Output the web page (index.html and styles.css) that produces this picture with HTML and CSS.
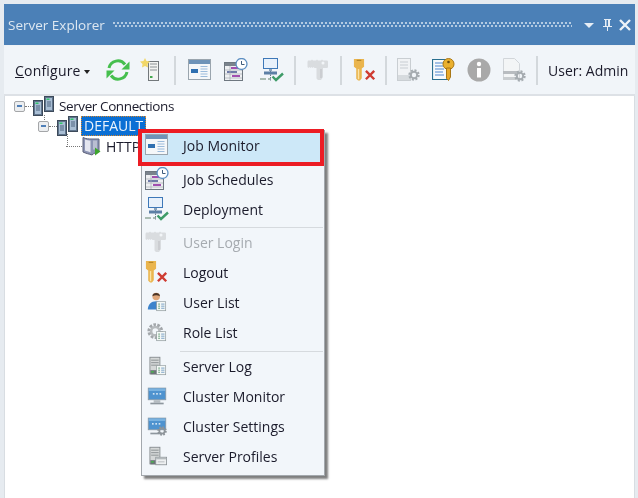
FILE: index.html
```html
<!DOCTYPE html>
<html lang="en">
<head>
<meta charset="utf-8">
<title>Server Explorer</title>
<link rel="stylesheet" href="styles.css">
</head>
<body>
<svg class="defs" aria-hidden="true">
  <symbol id="i-gear" viewBox="0 0 12 12">
    <circle cx="6" cy="6" r="4.6" fill="none" stroke="#8d9499" stroke-width="2.2" stroke-dasharray="2 1.6"/>
    <circle cx="6" cy="6" r="3.2" fill="none" stroke="#8d9499" stroke-width="2"/>
  </symbol>
  <symbol id="i-list" viewBox="0 0 12 12">
    <rect x=".5" y=".5" width="11" height="11" fill="#f4f8f6" stroke="#8f9a9c"/>
    <path d="M2.500 3.500h2M2.500 6h2M2.500 8.500h2" stroke="#5d9a73" stroke-width="1.200"/>
    <path d="M6 3.500h4M6 6h4M6 8.500h4" stroke="#7da3c8" stroke-width="1.200"/>
  </symbol>
  <symbol id="i-pair" viewBox="0 0 21 20">
    <rect x=".5" y="4.500" width="9" height="15" fill="#5f748c" stroke="#3d4a5a"/>
    <rect x="2" y="6" width="6" height="12" fill="#a9bed4"/>
    <rect x="2.500" y="6.500" width="3" height="1.500" fill="#31c56b"/>
    <path d="M3 10h4M3 12h4M3 14h4" stroke="#4f6480"/>
    <rect x="11.500" y=".5" width="9" height="15" fill="#5f748c" stroke="#3d4a5a"/>
    <rect x="13" y="2" width="6" height="12" fill="#a9bed4"/>
    <rect x="13.500" y="2.500" width="3" height="1.500" fill="#31c56b"/>
    <path d="M14 6h4M14 8h4M14 10h4" stroke="#4f6480"/>
  </symbol>
  <symbol id="i-http" viewBox="0 0 19 20">
    <path d="M1 1.500c3 1.500 6 1.500 9 1.500h7v12.500c-3 1-5 1.500-7 3.500-3-1-6-1.500-9-3z" fill="#8d95b5" stroke="#5b6078"/>
    <path d="M3 3.500c2 .7 4 1 5.500 1v12c-2-1-4-1.500-5.500-2z" fill="#e4e6ef"/>
    <path d="M11 4.500h4v9h-4z" fill="#b9bed2"/>
    <path d="M13 11.500l5.500 4-5.500 4z" fill="#3fa52f"/>
  </symbol>
  <symbol id="i-job" viewBox="0 0 24 24">
    <rect x=".5" y="1.500" width="22" height="20" fill="#f5f7f9" stroke="#9aa5ae"/>
    <rect x="1" y="2" width="21" height="4" fill="#6e93b8"/>
    <rect x="3" y="11" width="7" height="4" fill="#2f6fb0"/>
    <path d="M12.500 8.500h7M12.500 11h7M12.500 13.500h7M12.500 16h7M12.500 18.500h7" stroke="#9bbbdc"/>
  </symbol>
  <symbol id="i-sched" viewBox="0 0 24 24">
    <rect x=".5" y="4.500" width="18" height="18" fill="#eef0f2" stroke="#6e7780"/>
    <rect x="1" y="5" width="17" height="3" fill="#7a838c"/>
    <path d="M7 10h9" stroke="#a24fb0" stroke-width="2"/>
    <path d="M3 14h10" stroke="#6e7aa8" stroke-width="2"/>
    <path d="M8 18h8" stroke="#a24fb0" stroke-width="2"/>
    <path d="M1 12h17M1 16h17M1 20h17M6 8v14" stroke="#a8aeb4" stroke-width=".7"/>
    <circle cx="17.500" cy="6" r="5.500" fill="#fff" stroke="#5d8fc2" stroke-width="1.300"/>
    <path d="M17.500 3v3.500h3" fill="none" stroke="#3f5c7c"/>
  </symbol>
  <symbol id="i-deploy" viewBox="0 0 24 24">
    <rect x="3.500" y=".5" width="14" height="10" fill="#e8f1fb" stroke="#3e78b8"/>
    <path d="M9 11v2h3v-2" fill="#8aa3bb"/>
    <path d="M10.500 13v3" stroke="#6a7d8d"/>
    <rect x="4" y="13.500" width="13" height="3" fill="#5c7fa5"/>
    <path d="M0 21h6M8 21h3" stroke="#62816d" stroke-width="1.200"/>
    <path d="M10.500 16.500v6" stroke="#6a7d8d" stroke-dasharray="1.500 1"/>
    <path d="M12.500 18.500l3.500 3.500 7-6.500" fill="none" stroke="#3e9b68" stroke-width="2.400"/>
  </symbol>
  <symbol id="i-keyg" viewBox="0 0 24 24">
    <path d="M1 2.500h3l1-1 1 1h3l1-1 1 1h3l1-1 1 1h4a1.500 1.500 0 0 1 1 1v5.500a1.500 1.500 0 0 1-1 1h-4v9l-2 3h-3l-1.500-1.500v-10.500h-2l-1-1-1 1-1-1-1 1-1-1-1 1-1-1v-5z" fill="#d9dcdf"/>
    <circle cx="16" cy="5" r="1.500" fill="#f2f5f8"/>
    <path d="M14 11v9" stroke="#c6c9cc" stroke-width="1.500"/>
  </symbol>
  <symbol id="i-logout" viewBox="0 0 26 26">
    <path d="M1 1h11v8.500l-2.500 2v10.500l-2 2.500h-2l-2-2v-11l-2.500-2z" fill="#eab54e"/>
    <path d="M4 2v1h5v-1z" fill="#a87a1e"/>
    <path d="M6 12v11" stroke="#fbe3a5" stroke-width="1.500"/>
    <path d="M14 14l9 9M23 14l-9 9" stroke="#cf3c32" stroke-width="2.600"/>
  </symbol>
  <symbol id="i-srvset" viewBox="0 0 24 24">
    <rect x=".5" y=".5" width="13" height="22" fill="#f1f3f4" stroke="#bcc1c5"/>
    <path d="M3 4h8M3 7h8M3 10h8" stroke="#bcc1c5"/>
    <rect x="1" y="17" width="12" height="5" fill="#cfd3d6"/>
    <use href="#i-gear" x="11" y="11" width="12" height="12"/>
  </symbol>
  <symbol id="i-keydoc" viewBox="0 0 24 24">
    <path d="M.5 1.500h15v20h-15z" fill="#f7fafb" stroke="#2a6f8f" stroke-width="1.200"/>
    <path d="M3 5h9M3 8h8M3 11h9M3 14h8M3 17h9" stroke="#4f86d0" stroke-width="1.200"/>
    <circle cx="16.500" cy="6" r="5.500" fill="#eab02f" stroke="#a87716"/>
    <circle cx="16.500" cy="4" r="1.300" fill="#6a4a0d"/>
    <path d="M14.500 10h4v9l-2 3.500-2-2z" fill="#e9a92a" stroke="#a87716"/>
  </symbol>
  <symbol id="i-info" viewBox="0 0 24 24">
    <circle cx="12" cy="12" r="11.500" fill="#a9a9a9"/>
    <circle cx="12" cy="6" r="2.200" fill="#fff"/>
    <rect x="10" y="10" width="4" height="9.500" fill="#fff"/>
  </symbol>
  <symbol id="i-prof" viewBox="0 0 24 24">
    <path d="M1.500 .5h11l5 5v16h-16z" fill="#f4f5f6" stroke="#c8ccd0"/>
    <rect x="1" y="13" width="15" height="3" fill="#a5aaae"/>
    <rect x="1" y="19" width="15" height="3" fill="#bcc0c3"/>
    <use href="#i-gear" x="12" y="12" width="12" height="12"/>
  </symbol>
  <symbol id="i-refresh" viewBox="0 0 24 24">
    <path d="M3 10a9 9 0 0 1 16-3.500" fill="none" stroke="#46bf4e" stroke-width="3"/>
    <path d="M23.500 3.500v8h-8z" fill="#46bf4e"/>
    <path d="M21 14a9 9 0 0 1-16 3.500" fill="none" stroke="#46bf4e" stroke-width="3"/>
    <path d="M.5 20.500v-8h8z" fill="#46bf4e"/>
  </symbol>
  <symbol id="i-newsrv" viewBox="0 0 24 24">
    <rect x="9.500" y="3.500" width="10" height="19" fill="#f3f4f2" stroke="#73787c"/>
    <path d="M11 6h7M11 9h7M11 12h7" stroke="#8c9296"/>
    <rect x="11" y="18" width="2.500" height="2" fill="#46a84e"/>
    <path d="M6 0l1.500 3 3.500.5-2.500 2.500.5 3.500-3-1.500-3 1.500.5-3.500-2.500-2.500 3.500-.5z" fill="#f1d768"/>
  </symbol>
  <symbol id="i-user" viewBox="0 0 24 24">
    <circle cx="11" cy="5.500" r="4.500" fill="#e0a77b"/>
    <path d="M6.500 5c0-5 9-5 9 0-3-1.500-6-1.500-9 0z" fill="#4b3527"/>
    <path d="M1 21c0-6 4-10 10-10 3 0 5 1 6 3v7z" fill="#3e84cc"/>
    <use href="#i-list" x="11" y="11" width="12" height="12"/>
  </symbol>
  <symbol id="i-role" viewBox="0 0 24 24">
    <circle cx="10" cy="11" r="7.500" fill="none" stroke="#a2a6aa" stroke-width="4" stroke-dasharray="3 1.600"/>
    <circle cx="10" cy="11" r="5" fill="none" stroke="#b6babd" stroke-width="3"/>
    <use href="#i-list" x="11" y="11" width="12" height="12"/>
  </symbol>
  <symbol id="i-log" viewBox="0 0 24 24">
    <rect x="3.500" y="1.500" width="12" height="20" fill="#d5d8d8" stroke="#7f8588"/>
    <path d="M5 5h9M5 8h9M5 11h9" stroke="#7f8588"/>
    <rect x="4" y="17" width="12" height="5" fill="#6c7478"/>
    <rect x="5" y="18" width="3" height="2" fill="#49b04f"/>
    <use href="#i-list" x="11" y="11" width="12" height="12"/>
  </symbol>
  <symbol id="i-mon" viewBox="0 0 24 24">
    <rect x="1.500" y="2.500" width="21" height="14" fill="#4f93cf" stroke="#8a9aa6"/>
    <path d="M2 3h20v3h-20z" fill="#79b2e0"/>
    <path d="M7 9.500h2M11 9.500h2M15 9.500h2" stroke="#fff" stroke-width="1.600"/>
    <rect x="8" y="17" width="8" height="3" fill="#b5bcc1"/>
    <rect x="4" y="20" width="16" height="2" fill="#8e979e"/>
  </symbol>
  <symbol id="i-cset" viewBox="0 0 24 24">
    <rect x="1.500" y="2.500" width="21" height="14" fill="#4f93cf" stroke="#8a9aa6"/>
    <path d="M2 3h20v3h-20z" fill="#79b2e0"/>
    <path d="M6 9.500h2M10 9.500h2M14 9.500h2" stroke="#fff" stroke-width="1.600"/>
    <rect x="4" y="20" width="14" height="2" fill="#8e979e"/>
    <use href="#i-gear" x="12" y="12" width="12" height="12"/>
  </symbol>
  <symbol id="i-sprof" viewBox="0 0 24 24">
    <rect x="3.500" y="1.500" width="12" height="20" fill="#d5d8d8" stroke="#7f8588"/>
    <path d="M5 5h9M5 8h9M5 11h9" stroke="#7f8588"/>
    <rect x="4" y="17" width="12" height="5" fill="#6c7478"/>
    <rect x="5" y="18" width="3" height="2" fill="#49b04f"/>
    <rect x="10.500" y="13.500" width="13" height="9" fill="#eef0f1" stroke="#8b9296"/>
    <rect x="11" y="14" width="12" height="2" fill="#b4babd"/>
    <path d="M13 19h8" stroke="#b0b5b8"/>
  </symbol>
</svg>

<div class="window">
  <header class="titlebar">
    <span class="title">Server Explorer</span>
    <span class="grip"></span>
    <svg class="tbtn" width="16" height="16" viewBox="0 0 16 16"><path d="M3 6h10l-5 5z" fill="#e6edf5"/></svg>
    <svg class="tbtn" width="16" height="16" viewBox="0 0 16 16"><path d="M5 2h7v1h-1v6h2v1h-4v4h-1v-4h-4v-1h2v-6h-1zM7.500 3v6h1.500v-6z" fill="#e6edf5"/></svg>
    <svg class="tbtn" width="16" height="16" viewBox="0 0 16 16"><path d="M3 3l10 10M13 3l-10 10" stroke="#eef3f8" stroke-width="2.400"/></svg>
  </header>

  <nav class="toolbar">
    <span class="configure"><span class="ul">C</span>onfigure<span class="caret"></span></span>
    <span class="tool t33"><svg class="ti"><use href="#i-refresh"/></svg></span>
    <span class="tool t33"><svg class="ti"><use href="#i-newsrv"/></svg></span>
    <span class="sep s1"></span>
    <span class="tool t36"><svg class="ti"><use href="#i-job"/></svg></span>
    <span class="tool t36"><svg class="ti"><use href="#i-sched"/></svg></span>
    <span class="tool t36"><svg class="ti"><use href="#i-deploy"/></svg></span>
    <span class="sep s2"></span>
    <span class="tool t36"><svg class="ti"><use href="#i-keyg"/></svg></span>
    <span class="sep s3"></span>
    <span class="tool t36"><svg class="ti"><use href="#i-logout"/></svg></span>
    <span class="sep s4"></span>
    <span class="tool t35 dim"><svg class="ti"><use href="#i-srvset"/></svg></span>
    <span class="tool t35"><svg class="ti"><use href="#i-keydoc"/></svg></span>
    <span class="tool t35"><svg class="ti"><use href="#i-info"/></svg></span>
    <span class="tool t35 dim"><svg class="ti"><use href="#i-prof"/></svg></span>
    <span class="sep s5"></span>
    <span class="user">User: Admin</span>
  </nav>

  <main class="content">
    <ul class="tree">
      <li class="node n0">
        <span class="exp"></span><span class="dots"></span>
        <svg class="node-icon" width="21" height="20"><use href="#i-pair"/></svg>
        <span class="label">Server Connections</span>
      </li>
      <li class="node n1">
        <span class="exp"></span><span class="dots"></span>
        <svg class="node-icon" width="21" height="20"><use href="#i-pair"/></svg>
        <span class="label selected">DEFAULT</span>
      </li>
      <li class="node n2">
        <span class="dots long"></span>
        <svg class="node-icon" width="19" height="20"><use href="#i-http"/></svg>
        <span class="label">HTTP</span>
      </li>
    </ul>

    <ul class="menu">
      <li class="item active"><svg class="mi"><use href="#i-job"/></svg>Job Monitor</li>
      <li class="item"><svg class="mi"><use href="#i-sched"/></svg>Job Schedules</li>
      <li class="item"><svg class="mi"><use href="#i-deploy"/></svg>Deployment</li>
      <li class="divider d1"></li>
      <li class="item disabled"><svg class="mi"><use href="#i-keyg"/></svg>User Login</li>
      <li class="item"><svg class="mi"><use href="#i-logout"/></svg>Logout</li>
      <li class="item"><svg class="mi small"><use href="#i-user"/></svg>User List</li>
      <li class="item"><svg class="mi small"><use href="#i-role"/></svg>Role List</li>
      <li class="divider d2"></li>
      <li class="item"><svg class="mi small"><use href="#i-log"/></svg>Server Log</li>
      <li class="item"><svg class="mi small"><use href="#i-mon"/></svg>Cluster Monitor</li>
      <li class="item"><svg class="mi small"><use href="#i-cset"/></svg>Cluster Settings</li>
      <li class="item"><svg class="mi small"><use href="#i-sprof"/></svg>Server Profiles</li>
    </ul>
  </main>
</div>
</body>
</html>
```
FILE: styles.css
```css
* { box-sizing: border-box; }
html, body { height: 100%; }
body {
  margin: 0;
  padding: 4px 3px 0 4px;
  background: #e6ebf0;
  font-family: "Open Sans", "Noto Sans", sans-serif;
  font-size: 14px;
  color: #1b1b2b;
  overflow: hidden;
}
.defs { position: absolute; width: 0; height: 0; }
.window { display: flex; flex-direction: column; height: 100%; filter: blur(.3px); }

.titlebar {
  height: 41px;
  flex: none;
  display: flex;
  align-items: center;
  padding: 0 2px 0 4px;
  background: #4b80b7;
  color: #dde7f1;
}
.title { font-size: 13.5px; margin-right: 8px; white-space: nowrap; }
.grip {
  flex: 1;
  height: 6px;
  margin-right: 7px;
  background-image: radial-gradient(circle at 1px 1px, #b4cbe2 .8px, transparent 1px),
                    radial-gradient(circle at 3px 4px, #b4cbe2 .8px, transparent 1px);
  background-size: 4px 6px;
}
.tbtn { flex: none; margin-left: 2px; }

.toolbar {
  height: 51px;
  flex: none;
  display: flex;
  align-items: center;
  padding: 0 0 0 11px;
  background: #f1f5f9;
  border-top: 1px solid #eef2f6;
  border-bottom: 2px solid #dde1e6;
}
.configure { width: 86px; flex: none; letter-spacing: .2px; white-space: nowrap; }
.ul { text-decoration: underline; }
.caret {
  display: inline-block;
  margin-left: 3px;
  vertical-align: middle;
  border: 3px solid transparent;
  border-top: 4px solid #222;
  border-bottom: 0;
}
.tool { display: flex; justify-content: center; flex: none; }
.t33 { width: 33px; }
.t35 { width: 35px; }
.t36 { width: 36px; }
.dim { opacity: .75; }
.ti { width: 24px; height: 24px; display: block; }
.sep { width: 2px; height: 29px; flex: none; background: #d3d8dc; }
.s1 { margin: 0 6px 0 7px; }
.s2 { margin: 0 5px 0 4px; }
.s3 { margin: 0 5px 0 3px; }
.s4 { margin: 0 4px 0 2px; }
.s5 { margin: 0 10px 0 5px; }
.user { white-space: nowrap; }

.content {
  flex: 1;
  position: relative;
  background: #fff;
  border-left: 1px solid #d8dde2;
  border-right: 1px solid #d8dde2;
}
.tree { list-style: none; margin: 0; padding: 0; }
.node { height: 20px; display: flex; align-items: center; position: relative; white-space: nowrap; }
.n0 { padding-left: 9px; }
.n1 { padding-left: 33px; }
.n2 { padding-left: 61px; }
.exp {
  width: 11px; height: 11px; flex: none;
  background: linear-gradient(#4f7fb8, #4f7fb8) center / 5px 2px no-repeat #eceef0;
  border: 1px solid #a4a6a8;
  border-radius: 2px;
}
.dots { width: 8px; border-top: 1px dotted #777; flex: none; }
.dots.long { width: 16px; }
.node-icon { flex: none; }
.label { font-size: 13.5px; }
.n0 .label { margin-left: 5px; letter-spacing: -.4px; }
.n1 .label { margin-left: 3px; font-size: 14px; }
.n2 .label { margin-left: 5px; font-size: 14px; }
.n0::after, .n2::before {
  content: "";
  position: absolute;
  border-left: 1px dotted #777;
}
.n0::after { left: 39px; top: 19px; height: 5px; }
.n2::before { left: 62px; top: -2px; height: 11px; }
.selected {
  background: #0a6fd4;
  color: #eaf3fc;
  padding: 0 2px;
  height: 20px;
  line-height: 18px;
  border: 1px dotted #d8862a;
}

.menu {
  list-style: none;
  position: absolute;
  left: 136px;
  top: 34px;
  width: 184px;
  margin: 0;
  padding: 2px 4px 3px 0;
  background: #f2f6fa;
  border: 1px solid #a3a8ad;
  box-shadow: 3px 3px 2px rgba(0, 0, 0, .5);
}
.item { height: 30px; display: flex; align-items: center; padding: 0 0 2px 3px; white-space: nowrap; }
.mi { width: 24px; height: 24px; flex: none; margin-right: 14px; }
.small { width: 20px; height: 20px; margin: 0 16px 0 2px; }
.active {
  height: 29px;
  margin-bottom: 3px;
  padding-bottom: 5px;
  background: #cde8f8;
  outline: 4px solid #ec1c24;
}
.disabled { color: #a6abb0; }
.divider { margin-left: 38px; margin-right: -3px; height: 1px; background: #d6dade; }
.d1 { margin-top: 2px; }
.d2 { margin-top: 3px; }
```
